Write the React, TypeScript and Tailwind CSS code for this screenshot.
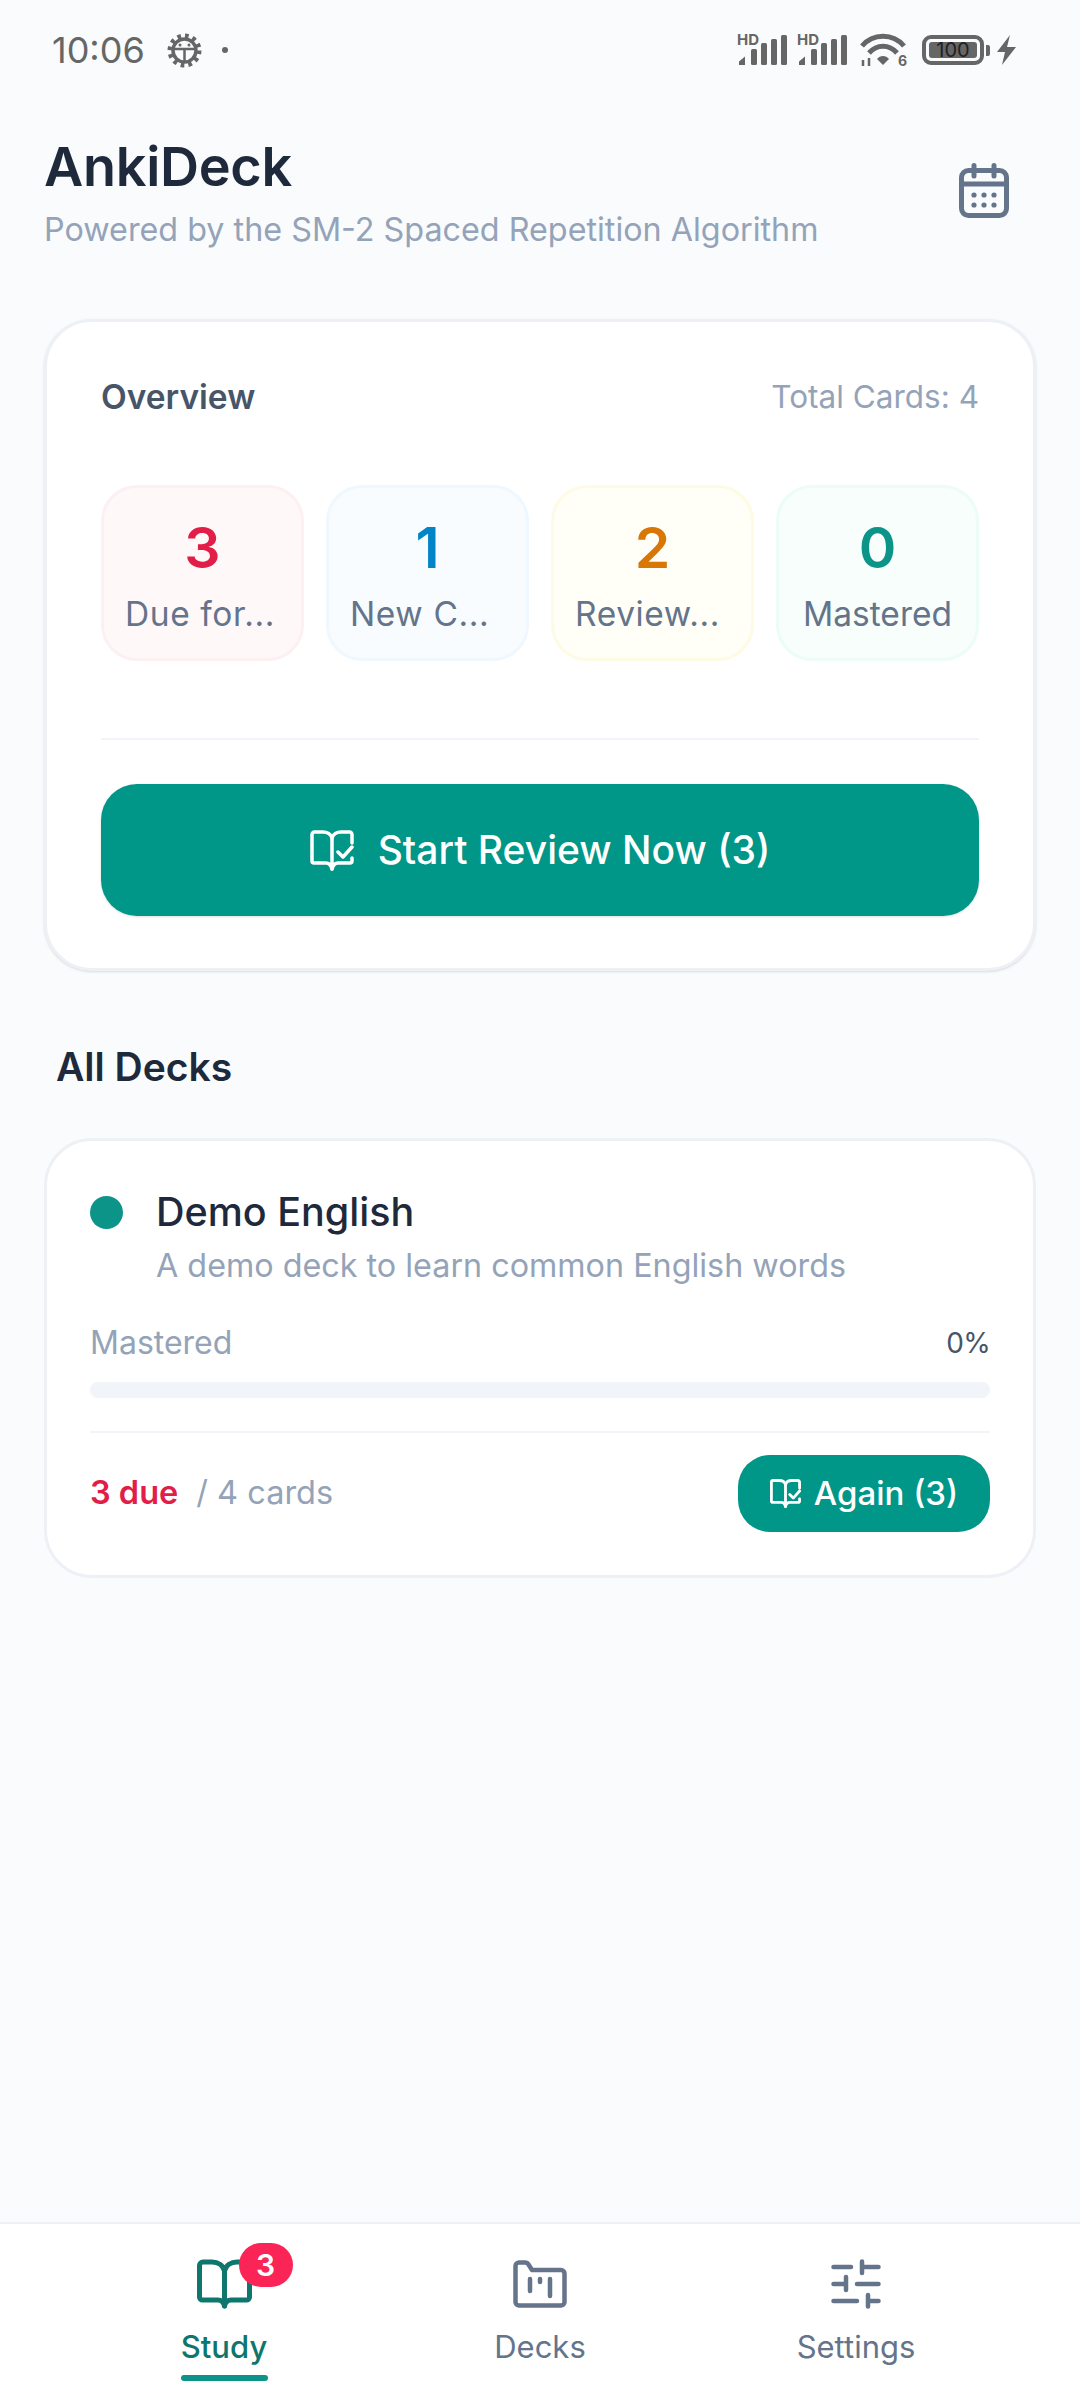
import React from 'react';

const BookIcon: React.FC<{ className?: string }> = ({ className }) => (
  <svg className={className} viewBox="0 0 55 50" fill="none" stroke="currentColor" strokeWidth="5" strokeLinecap="round" strokeLinejoin="round">
    <path d="M27.5 12 C26 6 21 3 15 3 H6 a3.5 3.5 0 0 0 -3.5 3.5 V38 a3 3 0 0 0 3 3 H21 C24 41 26.5 43 27.5 47 C28.5 43 31 41 34 41 H49.500 a3 3 0 0 0 3 -3 V6.500 a3.500 3.500 0 0 0 -3.500 -3.500 H40 C34 3 29 6 27.500 12 Z" />
    <path d="M27.500 12 V47" />
  </svg>
);

const BookCheckIcon: React.FC<{ className?: string; strokeWidth?: number }> = ({ className, strokeWidth = 3.5 }) => (
  <svg className={className} viewBox="0 0 44 41" fill="none" stroke="currentColor" strokeWidth={strokeWidth} strokeLinecap="round" strokeLinejoin="round">
    <path d="M22 8 C21 4 17 2 13 2 H4.500 a2.500 2.500 0 0 0 -2.500 2.500 V31 a2 2 0 0 0 2 2 H16 C19 33 21 35 22 39 C23 35 25 33 28 33 H40 a2 2 0 0 0 2 -2 V28" />
    <path d="M42 13 V4.500 a2.500 2.500 0 0 0 -2.500 -2.500 H31 C27 2 23 4 22 8 V39" />
    <path d="M28 22 L33 27 L42 17" />
  </svg>
);

const CalendarIcon = () => (
  <svg className="w-[50px] h-[55px] text-[#64748b]" viewBox="0 0 50 55" fill="none" stroke="currentColor" strokeWidth="5" strokeLinecap="round">
    <rect x="2.500" y="7.500" width="45" height="45" rx="7" />
    <path d="M15 2.500 V13 M35 2.500 V13 M2.500 21 H47.500" />
    <g fill="currentColor" stroke="none">
      <circle cx="15" cy="32" r="2.600" />
      <circle cx="25" cy="32" r="2.600" />
      <circle cx="35" cy="32" r="2.600" />
      <circle cx="15" cy="42" r="2.600" />
      <circle cx="25" cy="42" r="2.600" />
      <circle cx="35" cy="42" r="2.600" />
    </g>
  </svg>
);

const FolderIcon = () => (
  <svg className="w-[54px] h-[48px] text-[#64748b]" viewBox="0 0 54 48" fill="none" stroke="currentColor" strokeWidth="4.500" strokeLinecap="round" strokeLinejoin="round">
    <path d="M2.500 6 a3.500 3.500 0 0 1 3.500 -3.500 H12 a4 4 0 0 1 3.500 2 L19 10 H48 a3.500 3.500 0 0 1 3.500 3.500 V42 a3.500 3.500 0 0 1 -3.500 3.500 H6 a3.500 3.500 0 0 1 -3.500 -3.500 Z" />
    <path d="M17 19 V31 M27 19 V22 M37 19 V36" />
  </svg>
);

const SlidersIcon = () => (
  <svg className="w-[50px] h-[50px] text-[#64748b]" viewBox="0 0 50 50" fill="none" stroke="currentColor" strokeWidth="4.500" strokeLinecap="round">
    <path d="M2.500 8 H20 M31 8 H47.500 M31 2.500 V14" />
    <path d="M2.500 25 H15 M26 25 H47.500 M15 18 V31" />
    <path d="M2.500 42 H26 M37 42 H47.500 M37 36 V47.500" />
  </svg>
);

const SignalIcon = () => (
  <div className="relative w-[48px] h-[30px]">
    <span className="absolute left-[-2px] top-[-3px] text-[15px] leading-[15px] font-bold text-[#666]">HD</span>
    <svg className="absolute inset-0 w-[48px] h-[30px] text-[#666]" viewBox="0 0 48 30" fill="currentColor">
      <path d="M0 30 V26.500 L6 21.500 V30 Z" />
      <rect x="12" y="14" width="6" height="16" rx="1.500" />
      <rect x="22" y="8" width="6" height="22" rx="1.500" />
      <rect x="32" y="4" width="6" height="26" rx="1.500" />
      <rect x="42" y="0" width="6" height="30" rx="1.500" />
    </svg>
  </div>
);

const StatusBar = () => (
  <div className="h-[100px] flex items-center justify-between pl-[52px] pr-[64px] text-[#666]">
    <div className="flex items-center">
      <span className="text-[36px] leading-none">10:06</span>
      <svg className="w-[35px] h-[35px] ml-[22px]" viewBox="0 0 35 35" fill="none" stroke="currentColor" strokeWidth="3.500">
        <circle cx="17.500" cy="17.500" r="11.500" />
        <circle cx="17.500" cy="17.500" r="14.500" strokeWidth="5" strokeDasharray="3.600 4" />
        <path d="M6 16 H29 M17.500 16 V29" strokeWidth="2.500" />
        <circle cx="13" cy="12" r="1.500" fill="currentColor" stroke="none" />
        <circle cx="22" cy="12" r="1.500" fill="currentColor" stroke="none" />
      </svg>
      <span className="w-[6px] h-[6px] rounded-full bg-[#666] ml-[20px]" />
    </div>
    <div className="flex items-center">
      <SignalIcon />
      <div className="ml-[12px]">
        <SignalIcon />
      </div>
      <div className="relative w-[46px] h-[34px] ml-[13px]">
        <svg className="w-[46px] h-[34px]" viewBox="0 0 46 34" fill="none" stroke="currentColor" strokeWidth="5">
          <path d="M2 13 C13 0 33 0 44 13" />
          <path d="M9 20 C17 11 29 11 37 20" />
          <path d="M17 26 L23 32 L29 26 C26 22 20 22 17 26 Z" fill="currentColor" stroke="none" />
          <path d="M3 27 V33 M9 25 V33" strokeWidth="2.500" />
        </svg>
        <span className="absolute right-[-1px] bottom-[-1px] text-[14px] leading-[14px] font-bold">6</span>
      </div>
      <div className="ml-[16px] w-[62px] h-[30px] border-[4px] border-[#666] rounded-[9px] p-[3px] flex">
        <div className="flex-1 bg-[#666] rounded-[3px] flex items-center justify-center text-[#222] text-[20px] leading-none">100</div>
      </div>
      <span className="w-[4px] h-[11px] bg-[#666] rounded-r-[2px] ml-[2px]" />
      <svg className="w-[19px] h-[30px] ml-[7px]" viewBox="0 0 19 30" fill="currentColor">
        <path d="M13 0 L0 17 H8 L5 30 L19 12 H10 Z" />
      </svg>
    </div>
  </div>
);

// Labels are cut short in the picture, so the shortened ones sit left-aligned
const stats = [
  { value: 3, label: 'Due for...', tile: 'bg-[#fff8f9] border-[#fdf0f2]', num: 'text-[#e11d48]', text: 'text-left tracking-[0.6px]' },
  { value: 1, label: 'New C...', tile: 'bg-[#f8fcff] border-[#eff8fe]', num: 'text-[#0284c7]', text: 'text-left tracking-[0.6px]' },
  { value: 2, label: 'Review...', tile: 'bg-[#fffef7] border-[#fefbe4]', num: 'text-[#d97706]', text: 'text-left tracking-[0.6px]' },
  { value: 0, label: 'Mastered', tile: 'bg-[#f8fefc] border-[#ecfcf6]', num: 'text-[#0d9488]', text: 'text-center' },
];

const NavItem: React.FC<{ label: string; active?: boolean; children: React.ReactNode }> = ({ label, active, children }) => (
  <div className="flex flex-col items-center">
    <div className="h-[50px] flex items-center justify-center">{children}</div>
    <span className={`mt-[16px] text-[31px] leading-[44px] ${active ? 'font-medium text-[#0f766e]' : 'text-[#64748b]'}`}>{label}</span>
    <div className={`mt-[6px] w-[87px] h-[6px] rounded-full ${active ? 'bg-[#0d9488]' : ''}`} />
  </div>
);

export default function App() {
  return (
    <div className="w-[1080px] h-[2400px] flex flex-col bg-[#f9fbfd] font-['Inter','Noto_Sans',sans-serif]">
      <StatusBar />

      {/* Header */}
      <div className="pl-[44px] pr-[71px] flex items-center justify-between mt-[35px]">
        <div>
          <h1 className="text-[54px] leading-[64px] font-semibold text-[#1e293b] tracking-[-0.3px]">AnkiDeck</h1>
          <p className="text-[32.3px] leading-[44px] text-[#94a3b8] mt-[9px]">Powered by the SM-2 Spaced Repetition Algorithm</p>
        </div>
        <div className="mb-[6px]">
          <CalendarIcon />
        </div>
      </div>

      {/* Overview card */}
      <div className="mx-[44px] mt-[67px] h-[652px] bg-white border-[3px] border-[#edf1f5] rounded-[48px] px-[54px] shadow-sm">
        <div className="flex items-center justify-between mt-[53px] h-[44px]">
          <span className="text-[33.5px] font-semibold text-[#475569]">Overview</span>
          <span className="text-[31.5px] text-[#94a3b8]">Total Cards: 4</span>
        </div>
        <div className="grid grid-cols-4 gap-[22px] mt-[66px]">
          {stats.map((s) => (
            <div key={s.label} className={`h-[176px] border-[3px] rounded-[36px] pt-[6px] px-[21px] flex flex-col items-center justify-center ${s.tile}`}>
              <div className={`text-[57px] leading-[64px] font-semibold ${s.num}`}>{s.value}</div>
              <div className={`w-full mt-[12px] whitespace-nowrap text-[33.5px] leading-[44px] text-[#64748b] ${s.text}`}>{s.label}</div>
            </div>
          ))}
        </div>
        <div className="h-[2px] bg-[#f1f5f9] mt-[77px]" />
        <button className="w-full h-[132px] mt-[44px] rounded-[36px] bg-[#009688] text-white flex items-center justify-center text-[39px] font-medium shadow-sm">
          <BookCheckIcon className="w-[44px] h-[41px] mr-[24px]" />
          Start Review Now (3)
        </button>
      </div>

      {/* Decks */}
      <h2 className="ml-[56px] mt-[72px] text-[39px] leading-[48px] font-semibold text-[#1e293b]">All Decks</h2>

      <div className="mx-[44px] mt-[47px] h-[440px] bg-white border-[3px] border-[#edf1f5] rounded-[48px] px-[43px] pt-[47px]">
        <div className="flex items-center">
          <span className="w-[33px] h-[33px] rounded-full bg-[#0d9488]" />
          <span className="ml-[33px] text-[39.5px] leading-[48px] font-medium text-[#1e293b]">Demo English</span>
        </div>
        <p className="ml-[66px] mt-[8px] text-[32.3px] leading-[44px] text-[#94a3b8]">A demo deck to learn common English words</p>
        <div className="flex items-center justify-between mt-[33px] h-[44px]">
          <span className="text-[32px] text-[#94a3b8]">Mastered</span>
          <span className="text-[28px] text-[#475569] tracking-tight">0%</span>
        </div>
        <div className="h-[16px] rounded-full bg-[#f1f5f9] mt-[17px]" />
        <div className="h-[2px] bg-[#f1f5f9] mt-[33px]" />
        <div className="flex items-center justify-between mt-[22px]">
          <div className="flex items-center text-[32.5px]">
            <span className="font-semibold text-[#e11d48]">3 due</span>
            <span className="ml-[18px] text-[#94a3b8]">/ 4 cards</span>
          </div>
          <button className="w-[252px] h-[77px] rounded-[32px] bg-[#009688] text-white flex items-center justify-center text-[33px] font-medium">
            <BookCheckIcon className="w-[31px] h-[29px] mr-[13px]" strokeWidth={4} />
            Again (3)
          </button>
        </div>
      </div>

      <div className="flex-1" />

      {/* Bottom nav */}
      <nav className="h-[178px] bg-white border-t-[2px] border-[#edf1f5] px-[66px] pt-[35px] grid grid-cols-3">
        <NavItem label="Study" active>
          <div className="relative w-[55px] h-[50px] text-[#0f766e]">
            <BookIcon className="w-[55px] h-[50px]" />
            <span className="absolute left-[42px] top-[-16px] w-[54px] h-[44px] rounded-full bg-[#fb2456] text-white text-[30px] leading-[44px] font-semibold text-center">3</span>
          </div>
        </NavItem>
        <NavItem label="Decks">
          <FolderIcon />
        </NavItem>
        <NavItem label="Settings">
          <SlidersIcon />
        </NavItem>
      </nav>
    </div>
  );
}
